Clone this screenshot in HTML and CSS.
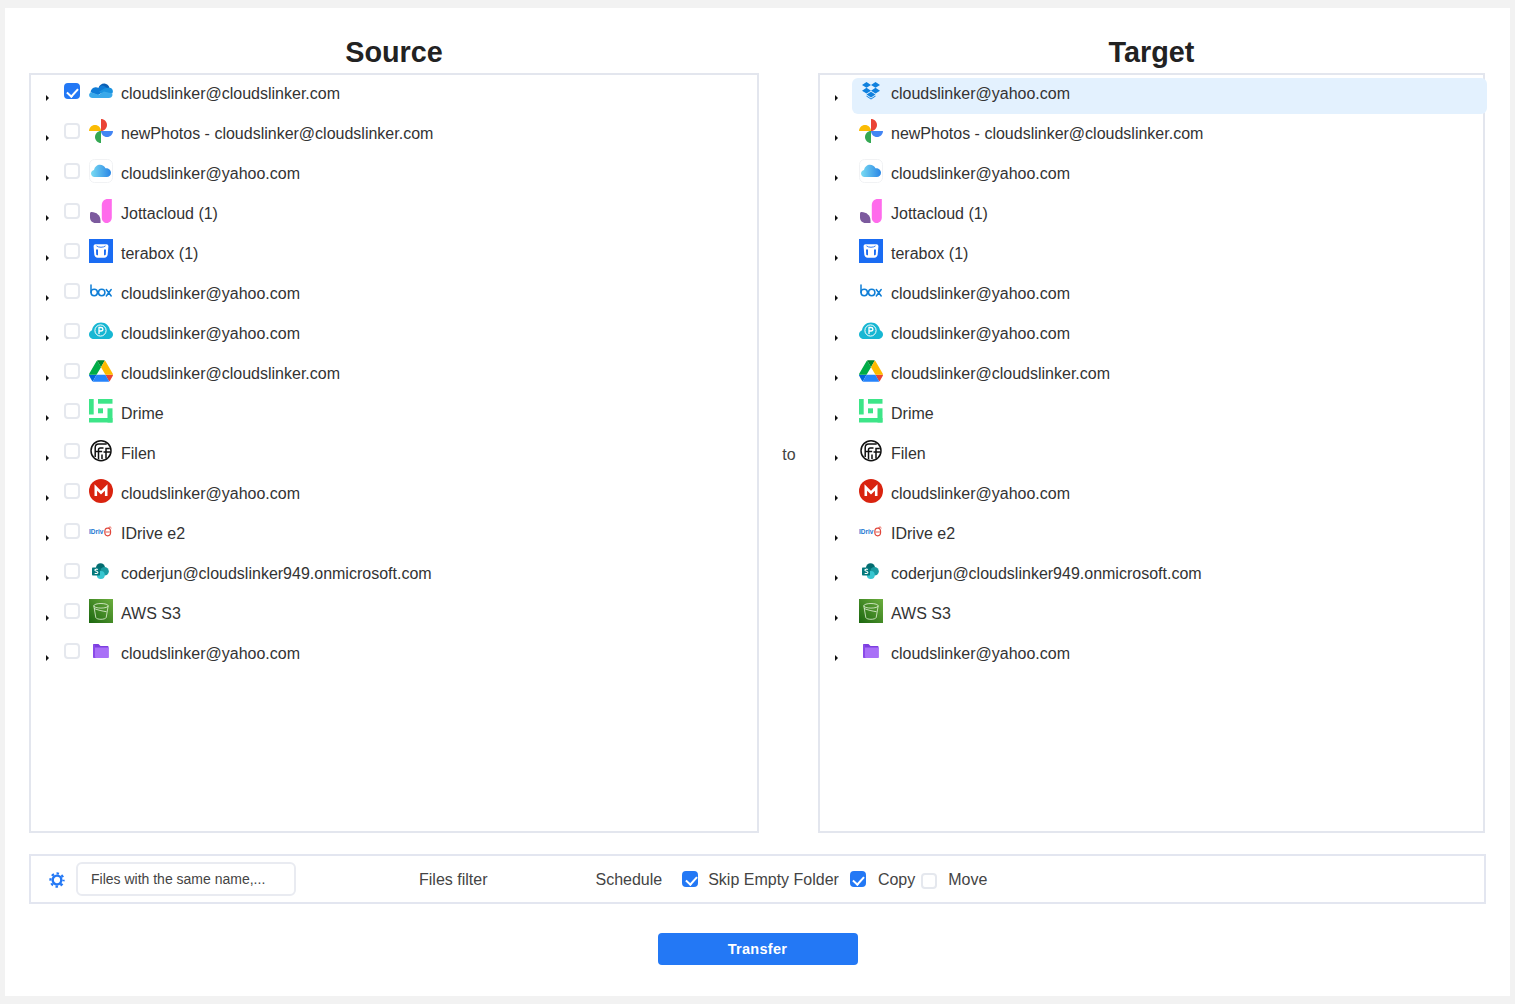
FILE: index.html
```html
<!DOCTYPE html>
<html lang="en">
<head>
<meta charset="utf-8">
<title>Transfer</title>
<link rel="stylesheet" href="styles.css">
</head>
<body>
<svg class="defs" width="0" height="0" aria-hidden="true">
  <defs>
    <symbol id="i-onedrive" viewBox="0 0 24 24">
      <path fill="#0a5fb4" d="M9.500 9c1-2.900 3.400-4.600 6-4.400 2.300.2 4.200 1.700 5 3.900l-6 6.200-7-3.800z"/>
      <path fill="#0f7bd6" d="M9.500 9c-.9-.6-2-.9-3-.8-2.800.2-4.900 2.500-4.800 5.100l7 3 11-6.500-5.500-3.200c-2-.8-3.500.7-4.700 2.400z"/>
      <path fill="#1a92e0" d="M20.500 8.700c1.900.1 3.400 1.700 3.400 3.600 0 .8-.2 1.500-.7 2.200l-8.200 1.500-5-3.200 5.400-3.200c1.500-.8 3.200-1.100 5.100-.9z"/>
      <path fill="#3aa9ea" d="M1.700 13.200C.6 14.200 0 15.200.1 16.200c.2 1.700 1.500 2.800 3.400 2.800h16.500c1.500 0 2.700-.7 3.300-2.200.3-.8.200-1.700-.1-2.400l-8.300-2-5 3.400-8.200-2.600z"/>
    </symbol>
    <symbol id="i-photos" viewBox="0 0 24 24">
      <path fill="#ea4335" d="M12 12V0c3.300 0 6 2.700 6 6s-2.700 6-6 6z"/>
      <path fill="#fbbc04" d="M12 12H0c0-3.300 2.700-6 6-6s6 2.700 6 6z"/>
      <path fill="#34a853" d="M12 12v12c-3.300 0-6-2.700-6-6s2.700-6 6-6z"/>
      <path fill="#4285f4" d="M12 12h12c0 3.300-2.700 6-6 6s-6-2.700-6-6z"/>
    </symbol>
    <symbol id="i-icloud" viewBox="0 0 24 24">
      <linearGradient id="g-icloud" x1="0" y1="0" x2="1" y2="0">
        <stop offset="0" stop-color="#7adcf2"/><stop offset="1" stop-color="#2a86e6"/>
      </linearGradient>
      <rect x=".5" y=".5" width="23" height="23" rx="5" fill="#fff" stroke="#f1f2f4"/>
      <path fill="url(#g-icloud)" d="M5.500 18C3.500 18 2 16.500 2 14.600c0-1.800 1.300-3.200 3-3.500.6-3.300 3.200-5.300 6-5.300 2.300 0 4.500 1.300 5.500 3.500 2.800-.4 5.500 1.700 5.500 4.500 0 2.400-1.900 4.200-4.300 4.200z"/>
    </symbol>
    <symbol id="i-jotta" viewBox="0 0 24 24">
      <path fill="#ff6bec" d="M22.800 0v18.500c0 3-2.300 5.500-5 5.500-2.800 0-5-2.300-5-5.100V6.500C12.800 2.500 15 0 19 0z"/>
      <path fill="#7c5a9e" d="M2.500 13c5 0 9 3.500 9 8.500V24H6.500C3.300 24 1 21.500 1 18.500v-4c0-.9.600-1.500 1.500-1.500z"/>
    </symbol>
    <symbol id="i-terabox" viewBox="0 0 24 24">
      <rect width="24" height="24" fill="#1a6cf3"/>
      <path fill="#fff" d="M6.500 5.300h11c1.200 0 2 1 1.900 2.200l-.7 8c-.2 1.900-1.500 3.200-3.300 3.200H8.600c-1.800 0-3.100-1.300-3.300-3.200l-.7-8c-.1-1.200.7-2.200 1.900-2.200z"/>
      <path fill="#1a6cf3" d="M7 10.500h2v5.700h-.9c-.5 0-.8-.3-.9-.8zM15 10.500h2l-.2 4.900c-.1.500-.4.800-.9.800H15z"/>
      <path fill="none" stroke="#1a6cf3" stroke-width=".9" d="M7.500 6.900c2 1.800 7 1.800 9 0"/>
    </symbol>
    <symbol id="i-box" viewBox="0 0 24 24">
      <g fill="none" stroke="#0f7ed6" stroke-width="1.500" stroke-linecap="round">
        <path d="M2 6v7.500"/>
        <circle cx="5.200" cy="13.500" r="3.200"/>
        <circle cx="12.700" cy="13.500" r="3.200"/>
        <path d="M17.300 10.500l4.900 6.500M22.200 10.500l-4.900 6.500"/>
      </g>
    </symbol>
    <symbol id="i-pcloud" viewBox="0 0 24 24">
      <path fill="#17b7d3" d="M5 20c-2.800 0-5-1.900-5-4.500 0-1.900 1.200-3.500 3-4.200C3.500 7 7.200 3.500 12 3.500s8.500 3.500 9 7.800c1.800.7 3 2.300 3 4.200 0 2.600-2.200 4.500-5 4.500z"/>
      <circle cx="11.500" cy="11.500" r="5.600" fill="none" stroke="#fff" stroke-width="1"/>
      <path fill="none" stroke="#fff" stroke-width="1.300" d="M10 15V8.500h2c1.200 0 1.900.7 1.900 1.700S13.200 12 12 12h-2"/>
    </symbol>
    <symbol id="i-drive" viewBox="0 0 87.300 78">
      <path d="m6.600 66.850 3.850 6.650c.8 1.400 1.950 2.500 3.300 3.300l13.750-23.800h-27.500c0 1.550.4 3.100 1.200 4.500z" fill="#0066da"/>
      <path d="m43.650 25-13.750-23.800c-1.350.8-2.500 1.900-3.300 3.300l-25.400 44a9.060 9.060 0 0 0-1.200 4.500h27.500z" fill="#00ac47"/>
      <path d="m73.550 76.800c1.350-.8 2.500-1.900 3.300-3.300l1.600-2.750 7.650-13.250c.8-1.400 1.200-2.950 1.200-4.500h-27.502l5.852 11.500z" fill="#ea4335"/>
      <path d="m43.650 25 13.750-23.800c-1.350-.8-2.900-1.200-4.500-1.200h-18.500c-1.600 0-3.150.45-4.500 1.200z" fill="#00832d"/>
      <path d="m59.800 53h-32.300l-13.750 23.800c1.350.8 2.900 1.200 4.500 1.200h50.800c1.600 0 3.150-.45 4.500-1.200z" fill="#2684fc"/>
      <path d="m73.400 26.500-12.700-22c-.8-1.400-1.950-2.500-3.300-3.300l-13.750 23.800 16.150 28h27.450c0-1.550-.4-3.100-1.200-4.500z" fill="#ffba00"/>
    </symbol>
    <symbol id="i-drime" viewBox="0 0 24 24">
      <g fill="#3de588">
        <rect x="0" y="0" width="4.700" height="15.500"/>
        <rect x="9" y="0" width="14.500" height="4.700"/>
        <rect x="9" y="9.300" width="5" height="5"/>
        <rect x="18.500" y="9.300" width="5" height="14.200"/>
        <rect x="0" y="19" width="23.500" height="4.500"/>
      </g>
    </symbol>
    <symbol id="i-filen" viewBox="0 0 24 24">
      <g fill="none" stroke="#111" stroke-width="1.500">
        <circle cx="12" cy="11.700" r="10"/>
        <path d="M6.200 18V8.500C6.200 6.500 7.700 5 9.700 5h8"/>
        <path d="M9.500 20V10.800c0-1.100.7-1.800 1.800-1.800h3.200"/>
        <path d="M6.200 12.500h7"/>
        <path d="M13 20v-4.500"/>
        <path d="M17 19.500V9.500h3.800"/>
        <path d="M14.500 13h6.500"/>
      </g>
    </symbol>
    <symbol id="i-mega" viewBox="0 0 24 24">
      <circle cx="12" cy="12" r="12" fill="#d9230f"/>
      <path fill="none" stroke="#fff" stroke-width="2.600" d="M6.800 17V8.500l5.200 5.200 5.200-5.200V17"/>
    </symbol>
    <symbol id="i-idrive" viewBox="0 0 24 24">
      <text x="0" y="15" class="idrive-word">IDriv</text>
      <ellipse cx="18.700" cy="13" rx="2.900" ry="3.800" fill="none" stroke="#e0473c" stroke-width="1.200"/>
      <path fill="none" stroke="#e0473c" stroke-width=".9" d="M16.500 13h4.400M19.500 8.500a2 2 0 0 1 3 .6"/>
    </symbol>
    <symbol id="i-sharepoint" viewBox="0 0 24 24">
      <circle cx="11.500" cy="8.700" r="4.500" fill="#036c70"/>
      <circle cx="15.500" cy="12.200" r="4.300" fill="#1a9ba1"/>
      <circle cx="11.800" cy="16" r="4" fill="#37c6d0"/>
      <rect x="3" y="8.500" width="8" height="8" rx=".8" fill="#03787c"/>
      <path fill="none" stroke="#fff" stroke-width="1.100" d="M8.800 10.500c-.9-.6-3-.4-2.900.8.100 1.200 3 .8 3 2.100 0 1.300-2.200 1.400-3.200.7"/>
    </symbol>
    <symbol id="i-s3" viewBox="0 0 24 24">
      <linearGradient id="g-s3" x1="0" y1="1" x2="1" y2="0">
        <stop offset="0" stop-color="#1b660f"/><stop offset="1" stop-color="#6cae3e"/>
      </linearGradient>
      <rect width="24" height="24" fill="url(#g-s3)"/>
      <g fill="none" stroke="#e6f2dc" stroke-width=".8">
        <ellipse cx="12" cy="6.800" rx="7.200" ry="2.300"/>
        <path d="M4.800 6.800 6.800 18.500c.5 1.200 2.800 1.800 5.200 1.800s4.700-.6 5.200-1.800l2-11.700"/>
        <path d="M5 9.500c4 1.600 8 2.500 12.500 3.200"/>
      </g>
    </symbol>
    <symbol id="i-folder" viewBox="0 0 24 24">
      <path fill="#7d3fe0" d="M4 6c0-.6.4-1 1-1h4.500l2 2h7c.6 0 1 .4 1 1v2H4z"/>
      <path fill="#a970f7" d="M4.500 8.500h15c.2 0 .4.200.4.400v9.100c0 .6-.4 1-1 1H6.500c-.6 0-1-.4-1-1z"/>
      <path fill="#8a4ae8" d="M4 6h2v11c0 1 .4 2 1 2H5c-.6 0-1-.4-1-1z"/>
    </symbol>
    <symbol id="i-dropbox" viewBox="0 0 24 24">
      <path fill="#1081de" d="M7.500 3 3 5.900l4.500 2.900L12 5.900zM16.500 3 12 5.900l4.500 2.900L21 5.900zM3 11.700l4.500 2.900 4.500-2.900-4.500-2.900zM16.500 8.800 12 11.700l4.500 2.900 4.500-2.900zM7.500 15.600 12 18.500l4.500-2.900L12 12.700z"/>
      <path fill="#1081de" d="M7.500 16.600 12 19.500l4.500-2.900v1L12 20.400l-4.500-2.800z"/>
    </symbol>
  </defs>
</svg>

<main class="card">
  <section class="panes">
    <h2 class="pane-title">Source</h2>
    <div></div>
    <h2 class="pane-title">Target</h2>

    <div class="tree tree-source">
      <div class="row"><span class="arrow"></span><span class="cb on"></span><svg class="icon"><use href="#i-onedrive"/></svg><span class="label">cloudslinker@cloudslinker.com</span></div>
      <div class="row"><span class="arrow"></span><span class="cb"></span><svg class="icon"><use href="#i-photos"/></svg><span class="label">newPhotos - cloudslinker@cloudslinker.com</span></div>
      <div class="row"><span class="arrow"></span><span class="cb"></span><svg class="icon"><use href="#i-icloud"/></svg><span class="label">cloudslinker@yahoo.com</span></div>
      <div class="row"><span class="arrow"></span><span class="cb"></span><svg class="icon"><use href="#i-jotta"/></svg><span class="label">Jottacloud (1)</span></div>
      <div class="row"><span class="arrow"></span><span class="cb"></span><svg class="icon"><use href="#i-terabox"/></svg><span class="label">terabox (1)</span></div>
      <div class="row"><span class="arrow"></span><span class="cb"></span><svg class="icon"><use href="#i-box"/></svg><span class="label">cloudslinker@yahoo.com</span></div>
      <div class="row"><span class="arrow"></span><span class="cb"></span><svg class="icon"><use href="#i-pcloud"/></svg><span class="label">cloudslinker@yahoo.com</span></div>
      <div class="row"><span class="arrow"></span><span class="cb"></span><svg class="icon"><use href="#i-drive"/></svg><span class="label">cloudslinker@cloudslinker.com</span></div>
      <div class="row"><span class="arrow"></span><span class="cb"></span><svg class="icon"><use href="#i-drime"/></svg><span class="label">Drime</span></div>
      <div class="row"><span class="arrow"></span><span class="cb"></span><svg class="icon"><use href="#i-filen"/></svg><span class="label">Filen</span></div>
      <div class="row"><span class="arrow"></span><span class="cb"></span><svg class="icon"><use href="#i-mega"/></svg><span class="label">cloudslinker@yahoo.com</span></div>
      <div class="row"><span class="arrow"></span><span class="cb"></span><svg class="icon"><use href="#i-idrive"/></svg><span class="label">IDrive e2</span></div>
      <div class="row"><span class="arrow"></span><span class="cb"></span><svg class="icon"><use href="#i-sharepoint"/></svg><span class="label">coderjun@cloudslinker949.onmicrosoft.com</span></div>
      <div class="row"><span class="arrow"></span><span class="cb"></span><svg class="icon"><use href="#i-s3"/></svg><span class="label">AWS S3</span></div>
      <div class="row"><span class="arrow"></span><span class="cb"></span><svg class="icon"><use href="#i-folder"/></svg><span class="label">cloudslinker@yahoo.com</span></div>
    </div>

    <div class="to">to</div>

    <div class="tree tree-target">
      <div class="row selected"><span class="arrow"></span><span class="node"><svg class="icon"><use href="#i-dropbox"/></svg><span class="label">cloudslinker@yahoo.com</span></span></div>
      <div class="row"><span class="arrow"></span><span class="node"><svg class="icon"><use href="#i-photos"/></svg><span class="label">newPhotos - cloudslinker@cloudslinker.com</span></span></div>
      <div class="row"><span class="arrow"></span><span class="node"><svg class="icon"><use href="#i-icloud"/></svg><span class="label">cloudslinker@yahoo.com</span></span></div>
      <div class="row"><span class="arrow"></span><span class="node"><svg class="icon"><use href="#i-jotta"/></svg><span class="label">Jottacloud (1)</span></span></div>
      <div class="row"><span class="arrow"></span><span class="node"><svg class="icon"><use href="#i-terabox"/></svg><span class="label">terabox (1)</span></span></div>
      <div class="row"><span class="arrow"></span><span class="node"><svg class="icon"><use href="#i-box"/></svg><span class="label">cloudslinker@yahoo.com</span></span></div>
      <div class="row"><span class="arrow"></span><span class="node"><svg class="icon"><use href="#i-pcloud"/></svg><span class="label">cloudslinker@yahoo.com</span></span></div>
      <div class="row"><span class="arrow"></span><span class="node"><svg class="icon"><use href="#i-drive"/></svg><span class="label">cloudslinker@cloudslinker.com</span></span></div>
      <div class="row"><span class="arrow"></span><span class="node"><svg class="icon"><use href="#i-drime"/></svg><span class="label">Drime</span></span></div>
      <div class="row"><span class="arrow"></span><span class="node"><svg class="icon"><use href="#i-filen"/></svg><span class="label">Filen</span></span></div>
      <div class="row"><span class="arrow"></span><span class="node"><svg class="icon"><use href="#i-mega"/></svg><span class="label">cloudslinker@yahoo.com</span></span></div>
      <div class="row"><span class="arrow"></span><span class="node"><svg class="icon"><use href="#i-idrive"/></svg><span class="label">IDrive e2</span></span></div>
      <div class="row"><span class="arrow"></span><span class="node"><svg class="icon"><use href="#i-sharepoint"/></svg><span class="label">coderjun@cloudslinker949.onmicrosoft.com</span></span></div>
      <div class="row"><span class="arrow"></span><span class="node"><svg class="icon"><use href="#i-s3"/></svg><span class="label">AWS S3</span></span></div>
      <div class="row"><span class="arrow"></span><span class="node"><svg class="icon"><use href="#i-folder"/></svg><span class="label">cloudslinker@yahoo.com</span></span></div>
    </div>
  </section>

  <section class="options">
    <svg class="gear" viewBox="0 0 24 24"><g fill="none" stroke="#2378f5"><circle cx="12" cy="12" r="6.500" stroke-width="3.600"/><circle cx="12" cy="12" r="9.800" stroke-width="3.400" stroke-dasharray="3.800 3.900" stroke-dashoffset="1.900"/></g></svg>
    <div class="conflict">Files with the same name,...</div>
    <span class="opt opt-filter">Files filter</span>
    <span class="opt opt-schedule">Schedule</span>
    <span class="cb on cb-skip"></span>
    <span class="opt opt-skip">Skip Empty Folder</span>
    <span class="cb on cb-copy"></span>
    <span class="opt opt-copy">Copy</span>
    <span class="cb cb-move"></span>
    <span class="opt opt-move">Move</span>
  </section>

  <div class="actions"><button class="transfer" type="button">Transfer</button></div>
</main>
</body>
</html>
```

FILE: styles.css
```css
* { box-sizing: border-box; }

html, body { height: 100%; }

body {
  margin: 0;
  padding: 8px 5px;
  background: #f2f2f2;
  font-family: "Liberation Sans", Arial, sans-serif;
  font-size: 16px;
  color: #333;
}

.defs { position: absolute; }

.card {
  height: 988px;
  background: #fff;
  padding: 0 24px;
}

.panes {
  display: grid;
  grid-template-columns: 730px 59px 667px;
  grid-template-rows: 65px 760px;
}

.pane-title {
  margin: 0;
  padding-top: 27px;
  font-size: 28.8px;
  line-height: 34px;
  font-weight: 700;
  color: #222;
  text-align: center;
}

.tree {
  border: 2px solid #e3e6ee;
  padding-top: 3px;
}

.to {
  align-self: center;
  padding: 4px 0 0 1px;
  text-align: center;
  color: #444;
}

.row {
  display: flex;
  align-items: flex-start;
  height: 36px;
  margin-bottom: 4px;
  color: #333;
}

.arrow {
  flex: none;
  width: 0;
  height: 0;
  margin: 17px 0 0 15px;
  border-style: solid;
  border-width: 3px 0 3px 3.500px;
  border-color: transparent transparent transparent #111;
}

.cb {
  flex: none;
  position: relative;
  display: block;
  width: 16px;
  height: 16px;
  border: 2px solid #e5e8ee;
  border-radius: 4px;
  background: #fff;
}

.tree .cb {
  margin: 5px 9.500px 0 14.500px;
}

.cb.on {
  background: #2378f5;
  border-color: #2378f5;
}

.cb.on::after {
  content: "";
  position: absolute;
  left: 3.500px;
  top: .5px;
  width: 5px;
  height: 9px;
  border: solid #fff;
  border-width: 0 2px 2px 0;
  transform: rotate(42deg);
}

.icon {
  flex: none;
  width: 24px;
  height: 24px;
  margin-top: 1px;
}

.label {
  margin-left: 8px;
  line-height: 32px;
  white-space: nowrap;
}

.idrive-word {
  font-family: "Liberation Sans", Arial, sans-serif;
  font-size: 6.500px;
  font-weight: 700;
  fill: #2276d2;
}

.node {
  display: flex;
  align-items: flex-start;
  flex: 1;
  height: 36px;
  margin-left: 14px;
  margin-right: -4px;
  padding-left: 7px;
  border-radius: 6px;
}

.selected .node { background: #e3f1fe; }

.options {
  position: relative;
  display: flex;
  align-items: center;
  height: 50px;
  margin-top: 21px;
  border: 2px solid #e3e6f0;
  padding-left: 18px;
}

.gear {
  flex: none;
  width: 16px;
  height: 16px;
  margin-top: 2px;
}

.conflict {
  flex: none;
  width: 220px;
  height: 34px;
  margin-left: 11px;
  padding-left: 13px;
  border: 2px solid #e9ebf1;
  border-radius: 6px;
  font-size: 14px;
  line-height: 30px;
  color: #444;
}

.opt {
  flex: none;
  color: #444;
  line-height: 20px;
  margin-top: 2px;
}

.opt-filter { margin-left: 123px; }
.opt-schedule { margin-left: 108px; }
.opt-skip { margin-left: 10px; }
.opt-copy { margin-left: 12px; }
.opt-move { margin-left: 11px; }

.cb-skip { margin-left: 20px; }
.cb-copy { margin-left: 11px; }
.cb-move { margin-left: 6px; margin-top: 4px; }

.actions {
  display: flex;
  justify-content: center;
  margin-top: 29px;
}

.transfer {
  width: 200px;
  height: 32px;
  padding: 0;
  border: 0;
  border-radius: 4px;
  background: #2378f5;
  color: #fff;
  font-family: "Liberation Sans", Arial, sans-serif;
  font-size: 14.500px;
  font-weight: 700;
  letter-spacing: .3px;
}
```
